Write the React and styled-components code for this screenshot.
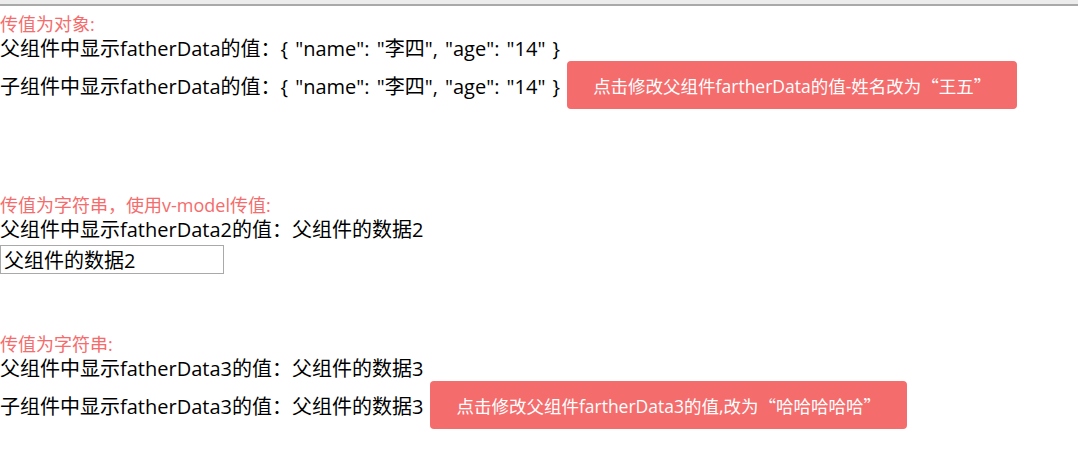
import React, { useState } from 'react';
import styled, { createGlobalStyle } from 'styled-components';

const FONT = `"Open Sans", "Noto Sans CJK SC", sans-serif`;

const GlobalStyle = createGlobalStyle`
  html, body {
    margin: 0;
    padding: 0;
    background: #fff;
  }
  body {
    font-family: ${FONT};
    color: #000;
  }
`;

const TopBar = styled.div`
  height: 4px;
  background: #ececec;
  border-bottom: 2px solid #a9a9a9;
`;

const Page = styled.div`
  display: flex;
  flex-direction: column;
`;

const Section = styled.section`
  display: flex;
  flex-direction: column;
  margin-top: ${(p) => p.$top}px;
`;

const Title = styled.div`
  color: #f56c6c;
  font-size: 18px;
  line-height: 24px;
`;

const Line = styled.div`
  font-size: 20px;
  line-height: 25px;
  white-space: nowrap;
`;

const Row = styled.div`
  display: flex;
  align-items: center;
  height: 48px;
  font-size: 20px;
  white-space: nowrap;
`;

const Json = styled.span`
  word-spacing: 2px;
`;

const Button = styled.button`
  height: 48px;
  margin-left: 7px;
  padding: 0 26px;
  border: none;
  border-radius: 4px;
  background: #f56c6c;
  color: #fff;
  font-family: ${FONT};
  font-size: 17.5px;
  white-space: nowrap;
  cursor: pointer;
`;

const Quote = styled.span`
  font-family: "Noto Sans CJK SC", sans-serif;
`;

const Input = styled.input`
  box-sizing: border-box;
  width: 224px;
  height: 29px;
  margin-top: 3px;
  padding: 0 3px;
  border: 1px solid #a9a9a9;
  font-family: ${FONT};
  font-size: 20px;
  color: #000;
  outline: none;
`;

const show = (o) => `{ "name": "${o.name}", "age": "${o.age}" }`;

export default function App() {
  const [fatherData, setFatherData] = useState({ name: '李四', age: '14' });
  const [fatherData2, setFatherData2] = useState('父组件的数据2');
  const [fatherData3, setFatherData3] = useState('父组件的数据3');

  return (
    <>
      <GlobalStyle />
      <TopBar />
      <Page>
        <Section $top={6}>
          <Title>传值为对象:</Title>
          <Line>
            父组件中显示fatherData的值：<Json>{show(fatherData)}</Json>
          </Line>
          <Row>
            子组件中显示fatherData的值：<Json>{show(fatherData)}</Json>
            <Button onClick={() => setFatherData({ ...fatherData, name: '王五' })}>
              点击修改父组件fartherData的值-姓名改为<Quote>“王五”</Quote>
            </Button>
          </Row>
        </Section>

        <Section $top={84}>
          <Title>传值为字符串，使用v-model传值:</Title>
          <Line>父组件中显示fatherData2的值：{fatherData2}</Line>
          <Input value={fatherData2} onChange={(e) => setFatherData2(e.target.value)} />
        </Section>

        <Section $top={58}>
          <Title>传值为字符串:</Title>
          <Line>父组件中显示fatherData3的值：{fatherData3}</Line>
          <Row>
            子组件中显示fatherData3的值：{fatherData3}
            <Button onClick={() => setFatherData3('哈哈哈哈哈')}>
              点击修改父组件fartherData3的值,改为<Quote>“哈哈哈哈哈”</Quote>
            </Button>
          </Row>
        </Section>
      </Page>
    </>
  );
}
